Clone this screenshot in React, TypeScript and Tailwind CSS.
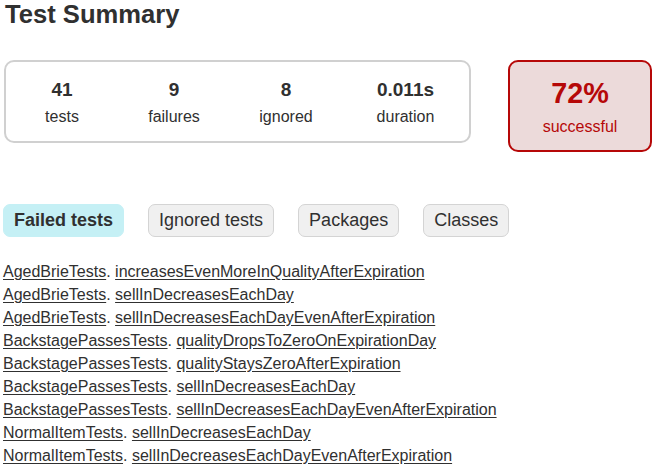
import React from 'react';

const failedTests: [string, string][] = [
  ['AgedBrieTests', 'increasesEvenMoreInQualityAfterExpiration'],
  ['AgedBrieTests', 'sellInDecreasesEachDay'],
  ['AgedBrieTests', 'sellInDecreasesEachDayEvenAfterExpiration'],
  ['BackstagePassesTests', 'qualityDropsToZeroOnExpirationDay'],
  ['BackstagePassesTests', 'qualityStaysZeroAfterExpiration'],
  ['BackstagePassesTests', 'sellInDecreasesEachDay'],
  ['BackstagePassesTests', 'sellInDecreasesEachDayEvenAfterExpiration'],
  ['NormalItemTests', 'sellInDecreasesEachDay'],
  ['NormalItemTests', 'sellInDecreasesEachDayEvenAfterExpiration'],
];

function InfoBox({ value, label, wide }: { value: string; label: string; wide?: boolean }) {
  return (
    <div className={`${wide ? 'w-[127px]' : 'w-[112px]'} pt-[15px] pb-[15px] text-center`}>
      <div className="text-[19px] font-bold leading-[26px] mb-1">{value}</div>
      <div className="text-[16px] leading-[19px]">{label}</div>
    </div>
  );
}

function Tab({ label, selected }: { label: string; selected?: boolean }) {
  return (
    <li
      className={`list-none px-[10px] py-[5px] rounded-[7px] border text-[18px] leading-[21px] ${
        selected ? 'bg-[#c5f0f5] border-[#c5f0f5] font-bold' : 'bg-[#f0f0f0] border-[#d4d4d4]'
      }`}
    >
      {label}
    </li>
  );
}

export default function App() {
  return (
    <div
      className="w-[659px] h-[472px] overflow-hidden bg-white text-[#303030] pl-[3px]"
      style={{ fontFamily: '"Liberation Sans", Arial, sans-serif' }}
    >
      <h1 className="text-[25.6px] font-bold leading-[29px] pl-[2px]">Test Summary</h1>

      <div className="flex items-start mt-[31px] pl-[1px]">
        <div className="flex border-2 border-[#d0d0d0] rounded-[10px]">
          <InfoBox value="41" label="tests" />
          <InfoBox value="9" label="failures" />
          <InfoBox value="8" label="ignored" />
          <InfoBox value="0.011s" label="duration" wide />
        </div>
        <div className="ml-[37px] w-[144px] border-2 border-[#b60808] bg-[#ecdada] rounded-[10px] pt-[15px] pb-[14px] text-center text-[#b60808]">
          <div className="text-[28.8px] font-bold leading-[33px] mb-[7px]">72%</div>
          <div className="text-[16px] leading-[19px]">successful</div>
        </div>
      </div>

      <ul className="flex gap-[24px] mt-[52px]">
        <Tab label="Failed tests" selected />
        <Tab label="Ignored tests" />
        <Tab label="Packages" />
        <Tab label="Classes" />
      </ul>

      <ul className="mt-[26px]">
        {failedTests.map(([cls, test], i) => (
          <li key={i} className="list-none text-[16px] leading-[18px] mb-[5px] whitespace-nowrap">
            <a className="underline underline-offset-[2px]">{cls}</a>.{' '}
            <a className="underline underline-offset-[2px]">{test}</a>
          </li>
        ))}
      </ul>
    </div>
  );
}
